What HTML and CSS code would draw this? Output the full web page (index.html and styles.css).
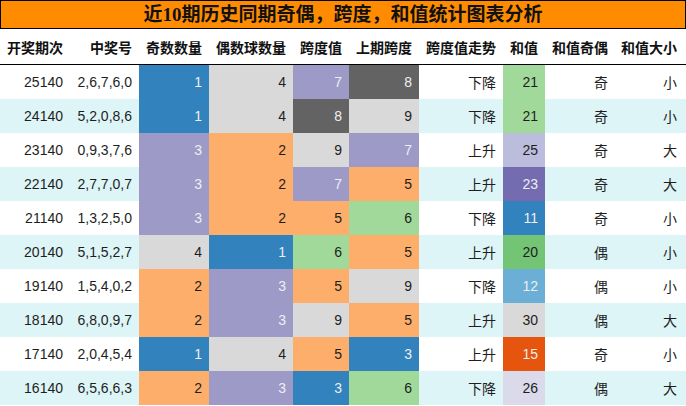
FILE: index.html
```html
<!DOCTYPE html>
<html lang="zh">
<head>
<meta charset="utf-8">
<link rel="stylesheet" href="styles.css">
</head>
<body>
<div class="title">近10期历史同期奇偶，跨度，和值统计图表分析</div>
<div class="grid">
  <div class="row head">
    <div class="c">开奖期次</div><div class="c">中奖号</div><div class="c">奇数数量</div><div class="c">偶数球数量</div><div class="c">跨度值</div><div class="c">上期跨度</div><div class="c">跨度值走势</div><div class="c">和值</div><div class="c">和值奇偶</div><div class="c last">和值大小</div>
  </div>
  <div class="row">
    <div class="c">25140</div><div class="c">2,6,7,6,0</div><div class="c blue">1</div><div class="c lgray">4</div><div class="c purple">7</div><div class="c dgray">8</div><div class="c cjk">下降</div><div class="c green">21</div><div class="c cjk">奇</div><div class="c cjk last">小</div>
  </div>
  <div class="row alt">
    <div class="c">24140</div><div class="c">5,2,0,8,6</div><div class="c blue">1</div><div class="c lgray">4</div><div class="c dgray">8</div><div class="c lgray">9</div><div class="c cjk">下降</div><div class="c green">21</div><div class="c cjk">奇</div><div class="c cjk last">小</div>
  </div>
  <div class="row">
    <div class="c">23140</div><div class="c">0,9,3,7,6</div><div class="c purple">3</div><div class="c orange">2</div><div class="c lgray">9</div><div class="c purple">7</div><div class="c cjk">上升</div><div class="c lpurple">25</div><div class="c cjk">奇</div><div class="c cjk last">大</div>
  </div>
  <div class="row alt">
    <div class="c">22140</div><div class="c">2,7,7,0,7</div><div class="c purple">3</div><div class="c orange">2</div><div class="c purple">7</div><div class="c orange">5</div><div class="c cjk">上升</div><div class="c dpurple">23</div><div class="c cjk">奇</div><div class="c cjk last">大</div>
  </div>
  <div class="row">
    <div class="c">21140</div><div class="c">1,3,2,5,0</div><div class="c purple">3</div><div class="c orange">2</div><div class="c orange">5</div><div class="c green">6</div><div class="c cjk">下降</div><div class="c blue">11</div><div class="c cjk">奇</div><div class="c cjk last">小</div>
  </div>
  <div class="row alt">
    <div class="c">20140</div><div class="c">5,1,5,2,7</div><div class="c lgray">4</div><div class="c blue">1</div><div class="c green">6</div><div class="c orange">5</div><div class="c cjk">上升</div><div class="c mgreen">20</div><div class="c cjk">偶</div><div class="c cjk last">小</div>
  </div>
  <div class="row">
    <div class="c">19140</div><div class="c">1,5,4,0,2</div><div class="c orange">2</div><div class="c purple">3</div><div class="c orange">5</div><div class="c lgray">9</div><div class="c cjk">下降</div><div class="c lblue">12</div><div class="c cjk">偶</div><div class="c cjk last">小</div>
  </div>
  <div class="row alt">
    <div class="c">18140</div><div class="c">6,8,0,9,7</div><div class="c orange">2</div><div class="c purple">3</div><div class="c lgray">9</div><div class="c orange">5</div><div class="c cjk">上升</div><div class="c lgray">30</div><div class="c cjk">偶</div><div class="c cjk last">大</div>
  </div>
  <div class="row">
    <div class="c">17140</div><div class="c">2,0,4,5,4</div><div class="c blue">1</div><div class="c lgray">4</div><div class="c orange">5</div><div class="c blue">3</div><div class="c cjk">上升</div><div class="c red">15</div><div class="c cjk">奇</div><div class="c cjk last">小</div>
  </div>
  <div class="row alt">
    <div class="c">16140</div><div class="c">6,5,6,6,3</div><div class="c orange">2</div><div class="c purple">3</div><div class="c blue">3</div><div class="c green">6</div><div class="c cjk">下降</div><div class="c vlpurple">26</div><div class="c cjk">偶</div><div class="c cjk last">大</div>
  </div>
</div>
</body>
</html>
```
FILE: styles.css
```css
html, body {
  margin: 0;
  padding: 0;
  background: #fff;
}
body {
  width: 686px;
  height: 406px;
  overflow: hidden;
  font-family: "Liberation Sans", "Noto Sans CJK SC", sans-serif;
  color: #1e1e1e;
}
.title {
  height: 27px;
  line-height: 27px;
  border: 1px solid #000;
  background: #ff8c00;
  text-align: center;
  font-family: "Liberation Serif", "Noto Sans CJK SC", serif;
  font-weight: bold;
  font-size: 19px;
  color: #111;
}
.row {
  display: grid;
  grid-template-columns: 70px 69px 70px 84px 56px 70px 84px 42px 70px 71px;
  height: 34px;
}
.row.alt {
  background: #ddf5f7;
}
.row.head {
  height: 35px;
  border-bottom: 1px solid #000;
}
.head .c {
  font-family: "Noto Sans CJK SC", sans-serif;
  font-weight: bold;
  font-size: 14px;
  color: #111;
}
.c {
  display: flex;
  align-items: center;
  justify-content: flex-end;
  padding-right: 7px;
  font-size: 14px;
  white-space: nowrap;
}
.c.last {
  padding-right: 9px;
}
.cjk {
  font-family: "Noto Sans CJK SC", sans-serif;
}
.blue { background: #3182bd; color: #eee; }
.lblue { background: #6baed6; color: #eee; }
.lgray { background: #d9d9d9; }
.dgray { background: #636363; color: #eee; }
.purple { background: #9e9ac8; color: #eee; }
.lpurple { background: #bcbddc; }
.vlpurple { background: #dadaeb; }
.dpurple { background: #756bb1; color: #eee; }
.orange { background: #fdae6b; }
.green { background: #a1d99b; }
.mgreen { background: #74c476; }
.red { background: #e6550d; color: #eee; }
```
